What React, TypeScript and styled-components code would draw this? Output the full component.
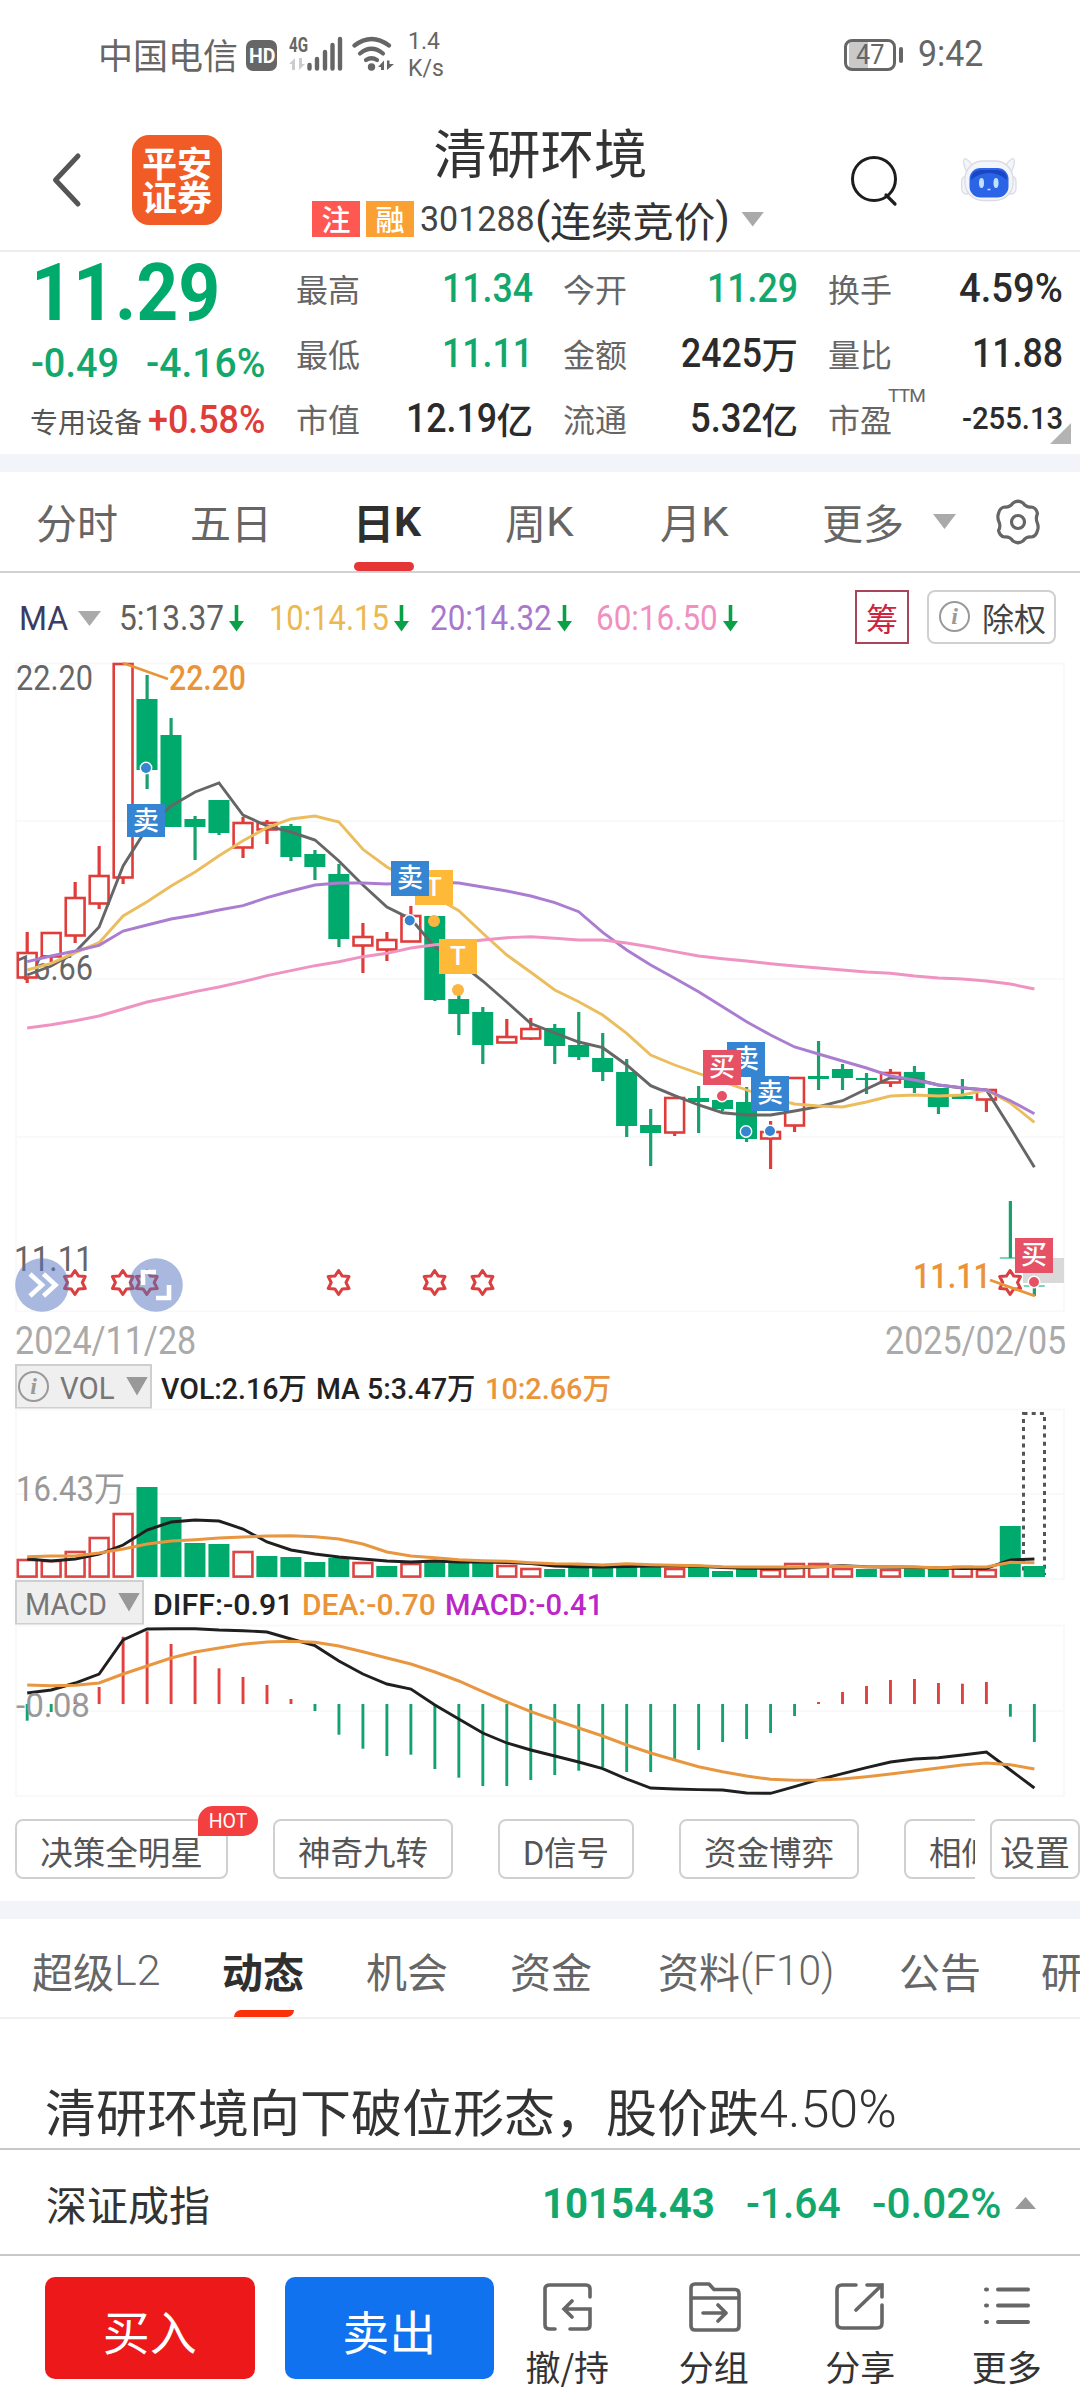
import React, { useLayoutEffect, useRef, useState } from 'react';
import styled, { createGlobalStyle } from 'styled-components';

const CJK = `"Noto Sans CJK SC", sans-serif`;
const NUM = `Roboto, "Noto Sans CJK SC", sans-serif`;
const GREEN = '#00aa6c';
const RED = '#e03c3a';

const Global = createGlobalStyle`
  * { box-sizing: border-box; }
  body { margin: 0; background: #fff; }
`;

const Screen = styled.div`
  width: 1080px;
  height: 2400px;
  overflow: hidden;
  background: #fff;
  color: #333;
  font-family: ${CJK};
  display: flex;
  flex-direction: column;
`;

/* ---------- condensed text ---------- */

const FitBox = styled.span<{ $w: number; $size: number; $weight: number; $color?: string }>`
  display: inline-block;
  flex: none;
  width: ${p => p.$w}px;
  font: ${p => p.$weight} ${p => p.$size}px/1.2 ${NUM};
  color: ${p => p.$color || 'inherit'};
  white-space: nowrap;
  text-align: left;
`;
const FitInner = styled.span`
  display: inline-block;
  transform-origin: 0 50%;
`;

type FitProps = { w: number; size: number; weight?: number; color?: string; children: string };

function Fit({ w, size, weight = 400, color, children }: FitProps) {
  const ref = useRef<HTMLSpanElement>(null);
  const [k, setK] = useState(1);
  useLayoutEffect(() => {
    if (ref.current) setK(w / ref.current.offsetWidth);
  }, [w, children]);
  return (
    <FitBox $w={w} $size={size} $weight={weight} $color={color}>
      <FitInner ref={ref} style={{ transform: `scaleX(${k})` }}>{children}</FitInner>
    </FitBox>
  );
}

const Caret = styled.i<{ $w?: number; $h?: number; $c?: string; $up?: boolean; $ml?: number }>`
  flex: none;
  width: ${p => p.$w || 23}px;
  height: ${p => p.$h || 15}px;
  margin-left: ${p => p.$ml || 0}px;
  background: ${p => p.$c || '#aaa'};
  clip-path: ${p => (p.$up ? 'polygon(50% 0, 100% 100%, 0 100%)' : 'polygon(0 0, 100% 0, 50% 100%)')};
`;

/* ---------- status bar ---------- */

const StatusBar = styled.div`
  height: 110px;
  flex: none;
  display: flex;
  align-items: center;
  padding: 0 97px 0 98px;
  color: #666;
`;
const Carrier = styled.span`
  font-size: 35px;
  line-height: 40px;
  width: 148px;
  margin-top: -2px;
`;
const HdBadge = styled.span`
  width: 31px;
  height: 31px;
  border-radius: 7px;
  background: #666;
  color: #fff;
  font: 700 20px/32px ${NUM};
  text-align: center;
`;
const StatusIcons = styled.svg`
  width: 112px;
  height: 40px;
  margin-left: 9px;
`;
const Speed = styled.span`
  margin-left: 10px;
  width: 50px;
  font: 400 23px/27px ${NUM};
`;
const Spacer = styled.span`
  flex: 1;
`;
const Battery = styled.span`
  position: relative;
  width: 52px;
  height: 32px;
  margin-right: 22px;
  border: 3px solid #666;
  border-radius: 8px;
  display: flex;
  justify-content: center;
  align-items: center;
  background: linear-gradient(90deg, #fff 2px, #c9c9c9 2px, #c9c9c9 21px, #fff 21px);
  &::after {
    content: '';
    position: absolute;
    right: -10px;
    top: 5px;
    width: 4px;
    height: 16px;
    border-radius: 2px;
    background: #666;
  }
`;

/* ---------- header ---------- */

const Header = styled.header`
  height: 142px;
  flex: none;
  border-bottom: 2px solid #ededed;
  display: flex;
  align-items: center;
  padding: 0 61px 0 50px;
`;
const BackIcon = styled.svg`
  width: 34px;
  height: 60px;
`;
const Logo = styled.div`
  width: 90px;
  height: 90px;
  margin-left: 48px;
  border-radius: 17px;
  background: #f15c26;
  color: #fff;
  font: 700 35px/34px ${CJK};
  padding: 10px 0 0 10px;
`;
const TitleBlock = styled.div`
  width: 472px;
  margin-left: 90px;
  height: 142px;
  padding-top: 10px;
`;
const Title = styled.h1`
  margin: 0 0 0 -9px;
  width: 475px;
  text-align: center;
  font: 400 53.5px/64px ${CJK};
`;
const SubTitle = styled.div`
  display: flex;
  align-items: center;
  height: 48px;
  margin-top: 12px;
`;
const Badge = styled.span<{ $c: string }>`
  width: 48px;
  height: 36px;
  margin-right: 6px;
  margin-top: -1px;
  background: ${p => p.$c};
  color: #fff;
  font: 500 29px/34px ${CJK};
  text-align: center;
`;
const SessionName = styled.span`
  font-size: 41.3px;
  line-height: 48px;
  white-space: nowrap;
`;
const SearchIcon = styled.svg`
  width: 56px;
  height: 60px;
  margin-left: 63px;
`;
const RobotIcon = styled.svg`
  width: 56px;
  height: 46px;
  margin-left: 58px;
`;

/* ---------- quote ---------- */

const Quote = styled.section`
  height: 202px;
  flex: none;
  display: flex;
  padding: 0 17px 0 30px;
  position: relative;
`;
const PriceCol = styled.div`
  width: 266px;
  display: flex;
  flex-direction: column;
  padding-top: 1px;
`;
const PriceLine = styled.div<{ $h: number; $spread?: boolean }>`
  height: ${p => p.$h}px;
  display: flex;
  align-items: center;
  justify-content: ${p => (p.$spread ? 'space-between' : 'flex-start')};
  padding: 0 ${p => (p.$spread ? 31 : 0)}px 0 1px;
`;
const Industry = styled.span`
  font-size: 28px;
  width: 118px;
  margin-left: -1px;
  color: #555;
`;
const StatGrid = styled.div`
  display: grid;
  grid-template-columns: 236px 234px 234px;
  column-gap: 31px;
  grid-auto-rows: 65px;
  padding-top: 3px;
`;
const Stat = styled.div`
  display: flex;
  align-items: center;
  justify-content: space-between;
`;
const StatLabel = styled.span`
  font-size: 32px;
  color: #666;
  display: flex;
`;
const Sup = styled.sup`
  font: 400 19px/19px ${NUM};
  margin-top: -9px;
  margin-left: -4px;
  letter-spacing: -0.8px;
`;
const StatValue = styled.span<{ $c?: string }>`
  display: flex;
  align-items: center;
  color: ${p => p.$c || '#2b2b2b'};
  font: 500 36.5px/48px ${CJK};
  margin: 2px -1px 0 0;
`;
const Corner = styled.i`
  position: absolute;
  right: 9px;
  bottom: 10px;
  width: 21px;
  height: 21px;
  background: #b3b3b3;
  clip-path: polygon(100% 0, 100% 100%, 0 100%);
`;
const Band = styled.div`
  height: 18px;
  flex: none;
  background: #f3f4f9;
`;

/* ---------- period tabs ---------- */

const PeriodTabs = styled.nav`
  height: 101px;
  flex: none;
  display: flex;
  border-bottom: 2px solid #d2d2d2;
  padding: 0 35px 0 36px;
  align-items: stretch;
`;
const PeriodTab = styled.span<{ $w: number; $on?: boolean }>`
  width: ${p => p.$w}px;
  font-size: 41px;
  line-height: 99px;
  font-weight: ${p => (p.$on ? 700 : 400)};
  color: ${p => (p.$on ? '#2f2f2f' : '#666')};
  display: flex;
  align-items: center;
  position: relative;
  white-space: nowrap;
  ${FitBox} { margin-top: 3px; }
  &::after {
    content: '';
    display: ${p => (p.$on ? 'block' : 'none')};
    position: absolute;
    left: 1px;
    bottom: 0;
    width: 60px;
    height: 9px;
    border-radius: 5px;
    background: #e63535;
  }
`;
const GearIcon = styled.svg`
  width: 50px;
  height: 50px;
  align-self: center;
  margin-left: 37px;
`;

/* ---------- MA legend ---------- */

const MaRow = styled.div`
  height: 87px;
  flex: none;
  display: flex;
  align-items: center;
  padding: 4px 24px 0 19px;
`;
const MaItem = styled.span<{ $w: number }>`
  width: ${p => p.$w}px;
  display: flex;
  align-items: center;
`;
const ArrowIcon = styled.svg`
  width: 15px;
  height: 27px;
  margin-left: 5px;
`;
const ChipButton = styled.span`
  width: 54px;
  height: 54px;
  margin: 0 18px 4px auto;
  border: 2px solid #a8455a;
  color: #cc2440;
  font: 400 32px/50px ${CJK};
  text-align: center;
`;
const RightsButton = styled.span`
  width: 129px;
  height: 54px;
  margin-bottom: 4px;
  border: 2px solid #d0d0d0;
  border-radius: 8px;
  display: flex;
  align-items: center;
  justify-content: space-between;
  padding: 0 8px 0 10px;
  font-size: 32px;
  line-height: 50px;
  color: #444;
`;
const InfoIcon = styled.span`
  width: 31px;
  height: 31px;
  flex: none;
  border: 2px solid #999;
  border-radius: 50%;
  color: #999;
  font: italic 700 24px/26px "Liberation Serif", serif;
  text-align: center;
`;

/* ---------- charts ---------- */

const Plot = styled.svg<{ $h: number }>`
  display: block;
  width: 1080px;
  height: ${p => p.$h}px;
  flex: none;
  font-family: ${NUM};
`;
const Dates = styled.div`
  height: 52px;
  flex: none;
  display: flex;
  align-items: center;
  justify-content: space-between;
  padding: 7px 14px 0 15px;
  color: #aaa;
`;
const IndicatorRow = styled.div<{ $gap: number }>`
  height: 44px;
  flex: none;
  display: flex;
  align-items: center;
  padding-left: 15px;
  gap: ${p => p.$gap}px;
  & > ${FitBox} { margin-top: 7px; }
`;
const Picker = styled.span<{ $w: number; $pad: number }>`
  width: ${p => p.$w}px;
  height: 45px;
  background: #efefef;
  border: 2px solid #cfcfcf;
  display: flex;
  align-items: center;
  justify-content: space-between;
  padding: 0 2px 0 ${p => p.$pad}px;
  color: #777;
  ${FitBox} { margin-top: 5px; }
`;

/* ---------- tools ---------- */

const Tools = styled.div`
  height: 104px;
  flex: none;
  display: flex;
  padding: 22px 0 0 15px;
`;
const ToolStrip = styled.div`
  width: 960px;
  height: 82px;
  margin-top: -16px;
  padding-top: 16px;
  overflow: hidden;
  display: flex;
  gap: 45px;
`;
const Tool = styled.span<{ $w: number; $size?: number; $left?: boolean }>`
  position: relative;
  flex: none;
  width: ${p => p.$w}px;
  height: 60px;
  border: 2px solid #d0d0d0;
  border-radius: 8px;
  font-size: ${p => p.$size || 32.5}px;
  line-height: 59px;
  text-align: ${p => (p.$left ? 'left' : 'center')};
  padding-left: ${p => (p.$left ? 23 : 0)}px;
  color: #555;
  white-space: nowrap;
`;
const Hot = styled.b`
  position: absolute;
  left: 181px;
  top: -15px;
  width: 60px;
  height: 30px;
  border-radius: 15px 15px 15px 0;
  background: #f43f41;
  color: #fff;
  font: 400 19.5px/31px ${NUM};
  text-align: center;
`;

/* ---------- content tabs ---------- */

const InfoTabs = styled.nav`
  height: 100px;
  flex: none;
  display: flex;
  padding-left: 32px;
  border-bottom: 2px solid #f0f0f0;
  overflow: hidden;
`;
const InfoTab = styled(PeriodTab)`
  line-height: 104px;
  padding-top: 4px;
  flex: none;
  &::after {
    left: 12px;
    height: 7px;
    border-radius: 7px 0 7px 0;
    background: #f9320c;
  }
`;
const Headline = styled.div`
  height: 131px;
  flex: none;
  display: flex;
  align-items: center;
  padding: 52px 0 0 45px;
  font-size: 51px;
  line-height: 60px;
  border-bottom: 2px solid #c8c8c8;
`;
const IndexRow = styled.div`
  height: 106px;
  flex: none;
  display: flex;
  align-items: center;
  padding: 2px 44px 0 46px;
  border-bottom: 2px solid #c8c8c8;
  font-size: 41px;
  color: #333;
`;
const IndexNums = styled.span`
  margin: 2px 14px 0 auto;
  display: flex;
  gap: 31px;
`;
const ActionBar = styled.footer`
  flex: 1;
  display: flex;
  padding: 21px 0 0 45px;
`;
const TradeButton = styled.span<{ $c: string }>`
  width: 210px;
  height: 102px;
  margin-right: 30px;
  border-radius: 10px;
  background: ${p => p.$c};
  color: #fff;
  font: 400 47px/105px ${CJK};
  text-align: center;
`;
const Action = styled.span`
  width: 146.5px;
  display: flex;
  flex-direction: column;
  align-items: center;
  font-size: 35px;
  line-height: 44px;
  svg { width: 56px; height: 56px; margin-bottom: 11px; }
`;
const Actions = styled.div`
  display: flex;
  margin-left: -30px;
  flex: none;
`;

/* ---------- data ---------- */

const X = (i: number) => 27.2 + 23.98 * i;
const line = (ys: number[]) => ys.map((y, i) => `${X(i).toFixed(1)},${y}`).join(' ');

// [rising, body top, body bottom, wick top, wick bottom]
const candles: number[][] = [
  [1, 952, 977, 932, 983], [1, 932, 956, 932, 962], [1, 897, 935, 882, 943], [1, 875, 903, 846, 909],
  [1, 663, 877, 663, 884], [0, 699, 770, 675, 789], [0, 735, 827, 718, 827], [0, 819, 827, 816, 860],
  [0, 800, 833, 800, 835], [1, 822, 847, 817, 858], [1, 822, 829, 820, 844], [0, 826, 857, 824, 861],
  [0, 854, 867, 850, 880], [0, 874, 939, 864, 947], [1, 936, 945, 923, 973], [1, 939, 949, 932, 961],
  [1, 915, 941, 906, 941], [0, 916, 1000, 916, 1001], [0, 999, 1014, 992, 1035], [0, 1012, 1045, 1007, 1064],
  [1, 1036, 1042, 1019, 1042], [1, 1028, 1038, 1018, 1040], [0, 1028, 1046, 1024, 1064], [0, 1045, 1057, 1012, 1060],
  [0, 1058, 1072, 1033, 1081], [0, 1072, 1126, 1059, 1137], [0, 1125, 1133, 1109, 1166], [1, 1097, 1132, 1097, 1136],
  [0, 1098, 1102, 1086, 1133], [0, 1100, 1109, 1100, 1111], [0, 1102, 1139, 1087, 1142], [1, 1131, 1138, 1121, 1169],
  [1, 1077, 1125, 1077, 1132], [0, 1076, 1079, 1041, 1090], [0, 1069, 1078, 1064, 1090], [0, 1078, 1080, 1073, 1094],
  [1, 1072, 1082, 1069, 1087], [0, 1072, 1088, 1066, 1093], [0, 1088, 1107, 1088, 1114], [0, 1096, 1099, 1079, 1099],
  [1, 1089, 1099, 1089, 1112], [0, 1257.5, 1258.5, 1201, 1258], [0, 1285.5, 1286.5, 1286, 1296],
];
const ma5 = [975, 966, 952, 927, 866, 828, 806, 792, 783, 815, 826, 832, 840, 861, 885, 907, 919, 947, 962, 981, 1002, 1023.5, 1033, 1042, 1047.7, 1065, 1085.7, 1095.7, 1105, 1112.7, 1115, 1115, 1111, 1106.7, 1100.7, 1089, 1077.7, 1079, 1085, 1088, 1090, 1128, 1167.3];
const ma10 = [970, 963.3, 952.7, 942.7, 916, 901.7, 886, 872, 855.7, 840.7, 827.7, 819, 816, 822, 849.3, 867, 880, 897, 910.7, 933.3, 955, 972.3, 990, 1001.7, 1015, 1033.3, 1055, 1065, 1073.5, 1081.7, 1090, 1098, 1104, 1106, 1107, 1102, 1096, 1095, 1096, 1095, 1090, 1103, 1122.3];
const ma20 = [961.7, 956, 951, 945.3, 931, 925, 919, 915, 910, 905.7, 897.7, 891, 885, 883, 883, 884, 882.7, 882, 883, 887, 891, 896, 902.7, 911.7, 932.3, 950, 965, 978.3, 991.7, 1006.7, 1021.7, 1035, 1047, 1054, 1061, 1068, 1076, 1080, 1085, 1087.7, 1090, 1100.7, 1113.7];
const ma60 = [1028, 1024.7, 1020.7, 1016, 1009, 1002, 997, 991.7, 987, 981.7, 975.7, 970.7, 965.7, 961.7, 956.7, 953.3, 948, 944.7, 942.7, 940, 937.7, 936.7, 938.3, 940, 940, 943, 947, 951.7, 956, 958.7, 961, 963.7, 966, 968, 970, 972, 973.3, 976, 978, 979, 981, 984, 989];
const volTop = [1559, 1560, 1551, 1537, 1513, 1487, 1517, 1543, 1544, 1551, 1556, 1557, 1562, 1558, 1562, 1566, 1563, 1560, 1562, 1563, 1565, 1568, 1569, 1567, 1567, 1567, 1567, 1568, 1567, 1571, 1569, 1569, 1563, 1563, 1568, 1569, 1569, 1568, 1568, 1566, 1569, 1526, 1566];
const volUp = new Set([0, 1, 2, 3, 4, 9, 14, 16, 20, 21, 27, 31, 32, 33, 34, 36, 39, 40]);
const vol5 = [1559, 1561, 1559, 1554, 1545, 1530, 1522, 1520, 1521, 1529, 1542, 1550, 1554, 1557, 1559, 1561, 1562, 1561, 1562, 1562, 1562.5, 1563.5, 1566, 1566.7, 1567, 1566.5, 1566, 1566, 1566.3, 1567.5, 1568.3, 1568.3, 1568, 1566.7, 1565.7, 1566.7, 1567, 1567.3, 1568, 1568.5, 1568.3, 1560, 1559];
const vol10 = [1556.7, 1556, 1556, 1553, 1549, 1544, 1541, 1539.7, 1538, 1537, 1536, 1535.7, 1536.7, 1539, 1544, 1552, 1556, 1557.7, 1559.7, 1560.7, 1561.3, 1562.7, 1563.7, 1564, 1565, 1563.7, 1564.7, 1565.3, 1565.7, 1566.7, 1567, 1567, 1567, 1566.7, 1566.3, 1566.7, 1566.7, 1567, 1567.7, 1567, 1567, 1562.3, 1562.7];
const macd = [1720.7, 1712, 1699, 1687, 1636.7, 1631.3, 1644, 1656, 1668.3, 1677, 1685, 1699, 1711, 1734.7, 1748.7, 1756, 1754.7, 1769, 1777.7, 1786, 1786, 1780, 1775, 1770.7, 1767, 1772, 1772, 1761, 1750, 1742, 1739, 1733, 1716, 1702, 1692, 1686, 1680, 1679, 1683, 1683.7, 1682, 1716.7, 1742];
const diff = [1693, 1690, 1683, 1674, 1640, 1629, 1628.7, 1628.7, 1630, 1630.7, 1632, 1639, 1645.7, 1661, 1674, 1684, 1689, 1705, 1719, 1733, 1743, 1750, 1756, 1762, 1768.7, 1779, 1788, 1789, 1789.6, 1790, 1793, 1793.3, 1786.7, 1779.7, 1773.7, 1767.7, 1762, 1759, 1757.7, 1755, 1752, 1770, 1788];
const dea = [1685, 1685.7, 1685.3, 1683, 1674, 1666, 1658, 1652, 1648, 1644.3, 1642, 1641.3, 1642.3, 1646, 1651.7, 1658, 1664, 1672, 1681, 1691.7, 1702, 1711.7, 1720, 1728, 1736, 1745, 1753, 1760, 1766.7, 1771.7, 1776, 1779.3, 1780.3, 1780, 1779, 1776.7, 1774, 1771, 1768, 1765, 1763, 1764.7, 1769];

const GRID = '#f9f9f9';

const Star = ({ x, y }: { x: number; y: number }) => {
  const pts = Array.from({ length: 12 }, (_, k) => {
    const r = k % 2 ? 7.4 : 12;
    const a = (Math.PI / 6) * k - Math.PI / 2;
    return `${(x + r * Math.cos(a)).toFixed(1)},${(y + r * Math.sin(a)).toFixed(1)}`;
  }).join(' ');
  return <polygon points={pts} fill="#fff" stroke="#dc3f3f" strokeWidth="3" strokeLinejoin="round" />;
};

const Mark = ({ x, y, c, t }: { x: number; y: number; c: string; t: string }) => (
  <g>
    <rect x={x} y={y} width="38" height={y === 804 ? 33 : 35} fill={c} />
    <text x={x + 19} y={y + 26} textAnchor="middle" fontSize="26" fontWeight="500" fill="#fff">{t}</text>
  </g>
);
const Dot = ({ x, y, c }: { x: number; y: number; c: string }) => (
  <circle cx={x} cy={y} r="5.7" fill={c} stroke="#fff" strokeWidth="1.4" />
);
const BLUE = '#3585d3';
const AMBER = '#ffb938';
const ROSE = '#e65166';

function PriceChart() {
  return (
    <Plot $h={652} viewBox="0 660 1080 652">
      <path d="M16 663.5H1064V1311.5H16ZM16 821H1064M16 979H1064M16 1137H1064" fill="none" stroke={GRID} strokeWidth="2" />
      <g fontSize="34.5" fill="#666">
        <text x="16" y="689.5" textLength="77" lengthAdjust="spacingAndGlyphs">22.20</text>
        <text x="16" y="980" textLength="77" lengthAdjust="spacingAndGlyphs">16.66</text>
        <text x="14" y="1271" textLength="79" lengthAdjust="spacingAndGlyphs">11.11</text>
      </g>
      <rect x="1023" y="1258" width="41" height="25" fill="#d9d9d9" />
      {candles.map(([up, t, b, h, l], i) => {
        const x = X(i);
        return up ? (
          <g key={i} stroke={RED} fill="none">
            <path d={`M${x} ${h}V${t}M${x} ${b}V${l}`} strokeWidth="3.2" />
            <rect x={x - 9.4} y={t + 1} width="18.8" height={Math.max(b - t - 0.5, 2)} strokeWidth="2.6" />
          </g>
        ) : (
          <g key={i} fill={GREEN}>
            <rect x={x - 1.6} y={h} width="3.2" height={l - h} fill="#18a06d" />
            <rect x={x - 10.6} y={t} width="21" height={b - t} />
          </g>
        );
      })}
      <g fill="none" strokeWidth="2.9">
        <polyline points={line(ma5)} stroke="#666" />
        <polyline points={line(ma10)} stroke="#ebbd5c" />
        <polyline points={line(ma20)} stroke="#ab7dd0" />
        <polyline points={line(ma60)} stroke="#ef93c3" />
      </g>
      {[2, 4, 5, 13, 17, 19, 41].map(i => <Star key={i} x={X(i) - 0.3} y={1282.5} />)}
      <path d="M123 663L168 679M990 1280L1035 1296" stroke="#ea943a" strokeWidth="2.8" />
      <g fontSize="34.5" fill="#ea943a" fontWeight="500">
        <text x="169" y="689.5" textLength="77" lengthAdjust="spacingAndGlyphs">22.20</text>
        <text x="913" y="1288" textLength="78" lengthAdjust="spacingAndGlyphs">11.11</text>
      </g>
      <Mark x={127} y={804} c={BLUE} t="卖" />
      <Dot x={146} y={768} c={BLUE} />
      <Mark x={415} y={870} c={AMBER} t="T" />
      <Mark x={391} y={861} c={BLUE} t="卖" />
      <Dot x={409.7} y={920.5} c={BLUE} />
      <circle cx="434" cy="921" r="6" fill="#fcb541" />
      <Mark x={439} y={939} c={AMBER} t="T" />
      <circle cx="458" cy="990" r="6" fill="#fcb541" />
      <Mark x={727} y={1042} c={BLUE} t="卖" />
      <Mark x={703} y={1050} c={ROSE} t="买" />
      <Mark x={751} y={1076} c={BLUE} t="卖" />
      <Dot x={722} y={1096} c={ROSE} />
      <Dot x={746} y={1131.5} c={BLUE} />
      <Dot x={770} y={1131} c={BLUE} />
      <Mark x={1015} y={1238} c={ROSE} t="买" />
      <Dot x={1034} y={1282} c={ROSE} />
      <g fill="rgb(82,113,190)" fillOpacity="0.5">
        <circle cx="42" cy="1285" r="26.8" />
        <circle cx="156" cy="1285" r="26.8" />
      </g>
      <path d="M30 1274L42 1285L30 1296M43.5 1274L55.5 1285L43.5 1296M143 1285V1272H156M156 1298H169V1285" fill="none" stroke="#fff" strokeWidth="4.6" />
    </Plot>
  );
}

function VolumeChart() {
  return (
    <Plot $h={172} viewBox="0 1408 1080 172">
      <path d="M16 1409.5H1064V1579H16ZM16 1494H1064" fill="none" stroke={GRID} strokeWidth="2" />
      <text x="16" y="1500.5" fontSize="34.5" fill="#999" textLength="109" lengthAdjust="spacingAndGlyphs">16.43万</text>
      {volTop.map((t, i) =>
        volUp.has(i) ? (
          <rect key={i} x={X(i) - 9.4} y={t + 1} width="18.8" height={1575.6 - t} fill="#fff" stroke="#dc4543" strokeWidth="2.6" />
        ) : (
          <rect key={i} x={X(i) - 10.6} y={t} width="21" height={1577 - t} fill={GREEN} />
        ),
      )}
      <rect x="1023.5" y="1413.5" width="21" height="160" fill="none" stroke="#555" strokeWidth="3" strokeDasharray="4 4.2" />
      <rect x={X(42) - 10.6} y="1566" width="21" height="11" fill={GREEN} />
      <polyline points={line(vol5)} fill="none" stroke="#1f1f1f" strokeWidth="2.9" />
      <polyline points={line(vol10)} fill="none" stroke="#e8963f" strokeWidth="3" />
    </Plot>
  );
}

function MacdChart() {
  return (
    <Plot $h={173} viewBox="0 1624 1080 173">
      <path d="M16 1625.5H1064V1796H16ZM16 1711H1064" fill="none" stroke={GRID} strokeWidth="2" />
      {macd.map((y, i) => (
        <path key={i} d={`M${X(i)} 1704V${y}`} stroke={y > 1704 ? '#13a371' : '#e2403e'} strokeWidth="2.9" />
      ))}
      <polyline points={line(diff)} fill="none" stroke="#1f1f1f" strokeWidth="2.9" />
      <polyline points={line(dea)} fill="none" stroke="#e8963f" strokeWidth="3" />
      <text x="16" y="1716.5" fontSize="33" fill="#999" textLength="74" lengthAdjust="spacingAndGlyphs">-0.08</text>
    </Plot>
  );
}

const Arrow = () => (
  <ArrowIcon viewBox="0 0 15 27">
    <path d="M7.5 0V20" stroke="#0aa048" strokeWidth="3.6" />
    <path d="M0 16H15L7.5 26.5Z" fill="#0aa048" />
  </ArrowIcon>
);

const maItems: [string, number, number, string][] = [
  ['5:13.37', 105, 150, '#606060'],
  ['10:14.15', 120, 161, '#ecb850'],
  ['20:14.32', 122, 166, '#a877ce'],
  ['60:16.50', 122, 160, '#f08fc0'],
];

const stats: { l: string; n: string; w: number; u?: string; c?: string; s?: number; sup?: string }[] = [
  { l: '最高', n: '11.34', w: 91, c: '#12a76c' },
  { l: '今开', n: '11.29', w: 91, c: '#12a76c' },
  { l: '换手', n: '4.59%', w: 104 },
  { l: '最低', n: '11.11', w: 91, c: '#12a76c' },
  { l: '金额', n: '2425', w: 81, u: '万' },
  { l: '量比', n: '11.88', w: 91 },
  { l: '市值', n: '12.19', w: 91, u: '亿' },
  { l: '流通', n: '5.32', w: 72, u: '亿' },
  { l: '市盈', n: '-255.13', w: 101, s: 31, sup: 'TTM' },
];

const infoTabs: [string, number][] = [
  ['超级L2', 190], ['动态', 144], ['机会', 144], ['资金', 148], ['资料(F10)', 241], ['公告', 142], ['研报', 90],
];

export default function App() {
  return (
    <>
      <Global />
      <Screen>
        <StatusBar>
          <Carrier>中国电信</Carrier>
          <HdBadge><Fit w={26} size={21} weight={700}>HD</Fit></HdBadge>
          <StatusIcons viewBox="286 35 112 40">
            <text x="289" y="52" fontFamily="Roboto" fontWeight="700" fontSize="20" fill="#666" textLength="19" lengthAdjust="spacingAndGlyphs">4G</text>
            <path d="M289 64L295 58V70H292V64ZM305 64L299 70V58H302V64Z" fill="#ccc" />
            <path d="M309.5 65V68.5M317 59V68.5M325 52V68.5M332.5 45V68.5M340 39V68.5" stroke="#666" strokeWidth="4.4" strokeLinecap="round" />
            <g fill="none" stroke="#666" strokeWidth="4.2" strokeLinecap="round">
              <path d="M354.5 45.5Q371.5 32.5 389 45.5" />
              <path d="M360 53.5Q371.5 44 383 53.5" />
              <path d="M366 60Q371.5 56.5 377 60" />
            </g>
            <circle cx="371.5" cy="67" r="3.7" fill="#666" />
            <path d="M378 67L384 60.5V70H381V67ZM394 64L387 70V60.5H389.5V64Z" fill="#666" />
          </StatusIcons>
          <Speed>1.4<br />K/s</Speed>
          <Spacer />
          <Battery><Fit w={28} size={27}>47</Fit></Battery>
          <Fit w={65} size={36}>9:42</Fit>
        </StatusBar>

        <Header>
          <BackIcon viewBox="0 0 34 60">
            <path d="M28 6L5.5 30L28 54" fill="none" stroke="#555" strokeWidth="5" strokeLinecap="round" strokeLinejoin="round" />
          </BackIcon>
          <Logo>平安<br />证券</Logo>
          <TitleBlock>
            <Title>清研环境</Title>
            <SubTitle>
              <Badge $c="#ff5751">注</Badge>
              <Badge $c="#fba134">融</Badge>
              <Fit w={115} size={35.5} color="#444">301288</Fit>
              <Fit w={15} size={42}>(</Fit>
              <SessionName>连续竞价</SessionName>
              <Fit w={15} size={42}>)</Fit>
              <Caret $ml={11} />
            </SubTitle>
          </TitleBlock>
          <SearchIcon viewBox="0 0 56 60">
            <circle cx="27" cy="29" r="21.5" fill="none" stroke="#1d1d1d" strokeWidth="3" />
            <path d="M39 45L48 54" stroke="#1d1d1d" strokeWidth="3.2" strokeLinecap="round" />
          </SearchIcon>
          <RobotIcon viewBox="962 157 56 46">
            <g fill="#f3f5fa" stroke="#d9dce6" strokeWidth="1.3">
              <path d="M966 168Q963 160 966 158.5Q970 160 973 165L968 172ZM1014 168Q1017 160 1014 158.5Q1010 160 1007 165L1012 172Z" />
              <rect x="962.7" y="176" width="10" height="18" rx="5" />
              <rect x="1007" y="176" width="10" height="18" rx="5" />
              <rect x="966" y="161" width="48" height="39.5" rx="18" />
            </g>
            <rect x="970.5" y="168" width="39" height="29.5" rx="11" fill="#2c64e8" />
            <path d="M972 180Q972 170 982 170H998Q1008 170 1008 180Q1000 173 990 173T972 180Z" fill="#1947c4" />
            <g fill="#bfe3ff">
              <ellipse cx="982.5" cy="183" rx="2.5" ry="5" />
              <ellipse cx="997" cy="183" rx="2.5" ry="5" />
            </g>
            <path d="M988.5 189.5H991.5" stroke="#bfe3ff" strokeWidth="1.5" />
          </RobotIcon>
        </Header>

        <Quote>
          <PriceCol>
            <PriceLine $h={81}><Fit w={189} size={79} weight={700} color={GREEN}>11.29</Fit></PriceLine>
            <PriceLine $h={60} $spread>
              <Fit w={88} size={40} weight={500} color="#12a76c">-0.49</Fit>
              <Fit w={119} size={40} weight={500} color="#12a76c">-4.16%</Fit>
            </PriceLine>
            <PriceLine $h={54}>
              <Industry>专用设备</Industry>
              <Fit w={117} size={38} weight={500} color={RED}>+0.58%</Fit>
            </PriceLine>
          </PriceCol>
          <StatGrid>
            {stats.map(s => (
              <Stat key={s.l}>
                <StatLabel>{s.l}{s.sup && <Sup>{s.sup}</Sup>}</StatLabel>
                <StatValue $c={s.c}>
                  <Fit w={s.w} size={s.s || 40} weight={500}>{s.n}</Fit>
                  {s.u}
                </StatValue>
              </Stat>
            ))}
          </StatGrid>
          <Corner />
        </Quote>
        <Band />

        <PeriodTabs>
          <PeriodTab $w={154}>分时</PeriodTab>
          <PeriodTab $w={163}>五日</PeriodTab>
          <PeriodTab $w={152} $on>日<Fit w={27} size={41} weight={700}>K</Fit></PeriodTab>
          <PeriodTab $w={155}>周<Fit w={28} size={41}>K</Fit></PeriodTab>
          <PeriodTab $w={162}>月<Fit w={28} size={41}>K</Fit></PeriodTab>
          <PeriodTab $w={111}>更多</PeriodTab>
          <PeriodTab $w={23}><Caret /></PeriodTab>
          <GearIcon viewBox="0 0 50 50">
            <path d="M20 6Q25 2.5 30 6Q33 10.5 38.5 10Q43 10.5 44.5 16.5Q42.5 21 44 25Q46 30 44.5 33.5Q43 39.5 38.5 40Q33 39.5 30 44Q25 47.5 20 44Q17 39.5 11.5 40Q7 39.5 5.5 33.5Q8 29 6 25Q4 20 5.5 16.5Q7 10.5 11.5 10Q17 10.5 20 6Z" fill="none" stroke="#666" strokeWidth="3.2" strokeLinejoin="round" />
            <circle cx="25" cy="25" r="6.5" fill="none" stroke="#666" strokeWidth="3.2" />
          </GearIcon>
        </PeriodTabs>

        <MaRow>
          <MaItem $w={100}>
            <Fit w={49} size={34} color="#3c3c62">MA</Fit>
            <Caret $ml={10} />
          </MaItem>
          {maItems.map(([t, w, cell, c]) => (
            <MaItem key={t} $w={cell}>
              <Fit w={w} size={35} color={c}>{t}</Fit>
              <Arrow />
            </MaItem>
          ))}
          <ChipButton>筹</ChipButton>
          <RightsButton><InfoIcon>i</InfoIcon>除权</RightsButton>
        </MaRow>

        <PriceChart />
        <Dates>
          <Fit w={181} size={38}>2024/11/28</Fit>
          <Fit w={181} size={38}>2025/02/05</Fit>
        </Dates>
        <IndicatorRow $gap={9}>
          <Picker $w={137} $pad={1}>
            <InfoIcon>i</InfoIcon>
            <Fit w={55} size={31}>VOL</Fit>
            <Caret $w={22} $h={19} $c="#999" />
          </Picker>
          <Fit w={146} size={29.5} weight={500} color="#222">VOL:2.16万</Fit>
          <Fit w={160} size={29.5} weight={500} color="#222">MA 5:3.47万</Fit>
          <Fit w={126} size={29.5} weight={500} color="#ea943a">10:2.66万</Fit>
        </IndicatorRow>
        <VolumeChart />
        <IndicatorRow $gap={9}>
          <Picker $w={129} $pad={8}>
            <Fit w={82} size={31}>MACD</Fit>
            <Caret $w={22} $h={19} $c="#999" />
          </Picker>
          <Fit w={140} size={29.5} weight={500} color="#222">DIFF:-0.91</Fit>
          <Fit w={134} size={29.5} weight={500} color="#ea943a">DEA:-0.70</Fit>
          <Fit w={158} size={29.5} weight={500} color="#bb26c8">MACD:-0.41</Fit>
        </IndicatorRow>
        <MacdChart />

        <Tools>
          <ToolStrip>
            <Tool $w={213}>决策全明星<Hot>HOT</Hot></Tool>
            <Tool $w={180}>神奇九转</Tool>
            <Tool $w={136}><Fit w={21} size={34}>D</Fit>信号</Tool>
            <Tool $w={180}>资金博弈</Tool>
            <Tool $w={180} $left>相似K线</Tool>
          </ToolStrip>
          <Spacer />
          <Tool $w={90} $size={35}>设置</Tool>
        </Tools>
        <Band />

        <InfoTabs>
          {infoTabs.map(([t, w]) => {
            const m = t.match(/^([^A-Z(]+)(.*)$/)!;
            return (
              <InfoTab key={t} $w={w} $on={t === '动态'}>
                {m[1]}
                {m[2] && <Fit w={m[2] === 'L2' ? 46 : 94} size={42} weight={300}>{m[2]}</Fit>}
              </InfoTab>
            );
          })}
        </InfoTabs>
        <Headline>清研环境向下破位形态，股价跌<Fit w={138} size={51} weight={300}>4.50%</Fit></Headline>
        <IndexRow>
          深证成指
          <IndexNums>
            <Fit w={173} size={42} weight={700} color="#12a76c">10154.43</Fit>
            <Fit w={95} size={42} weight={500} color="#12a76c">-1.64</Fit>
            <Fit w={129} size={42} weight={500} color="#12a76c">-0.02%</Fit>
          </IndexNums>
          <Caret $up $w={21} $h={12} $c="#999" />
        </IndexRow>

        <ActionBar>
          <TradeButton $c="#ec1819">买入</TradeButton>
          <TradeButton $c="#1072ee">卖出</TradeButton>
          <Actions>
            <Action>
              <svg viewBox="0 0 56 56" fill="none" stroke="#666" strokeWidth="3.6" strokeLinecap="round">
                <path d="M51 20V12Q51 8 47 8H11Q6 8 6 12V48Q6 52 11 52H16M31 52H47Q51 52 51 48V32H26M33 24L25 32L33 40" />
              </svg>
              撤/持
            </Action>
            <Action>
              <svg viewBox="0 0 56 56" fill="none" stroke="#666" strokeWidth="3.6" strokeLinecap="round" strokeLinejoin="round">
                <path d="M5 21V11Q5 7 9 7H23L28 12.5H49Q53 12.5 53 17V49Q53 53 49 53H9Q5 53 5 49V21H53M17 36H39M32 28L40 36L32 44" />
              </svg>
              分组
            </Action>
            <Action>
              <svg viewBox="0 0 56 56" fill="none" stroke="#666" strokeWidth="3.6" strokeLinecap="round">
                <path d="M24 8H10Q5 8 5 13V46Q5 51 10 51H45Q50 51 50 46V28M35 8H50V20M50 8L24 33" />
              </svg>
              分享
            </Action>
            <Action>
              <svg viewBox="0 0 56 56" stroke="#666" strokeWidth="4" strokeLinecap="round">
                <path d="M19 12.5H49M19 28.5H49M19 45H49M7 12.5H8M7 28.5H8M7 45H8" />
              </svg>
              更多
            </Action>
          </Actions>
        </ActionBar>
      </Screen>
    </>
  );
}
